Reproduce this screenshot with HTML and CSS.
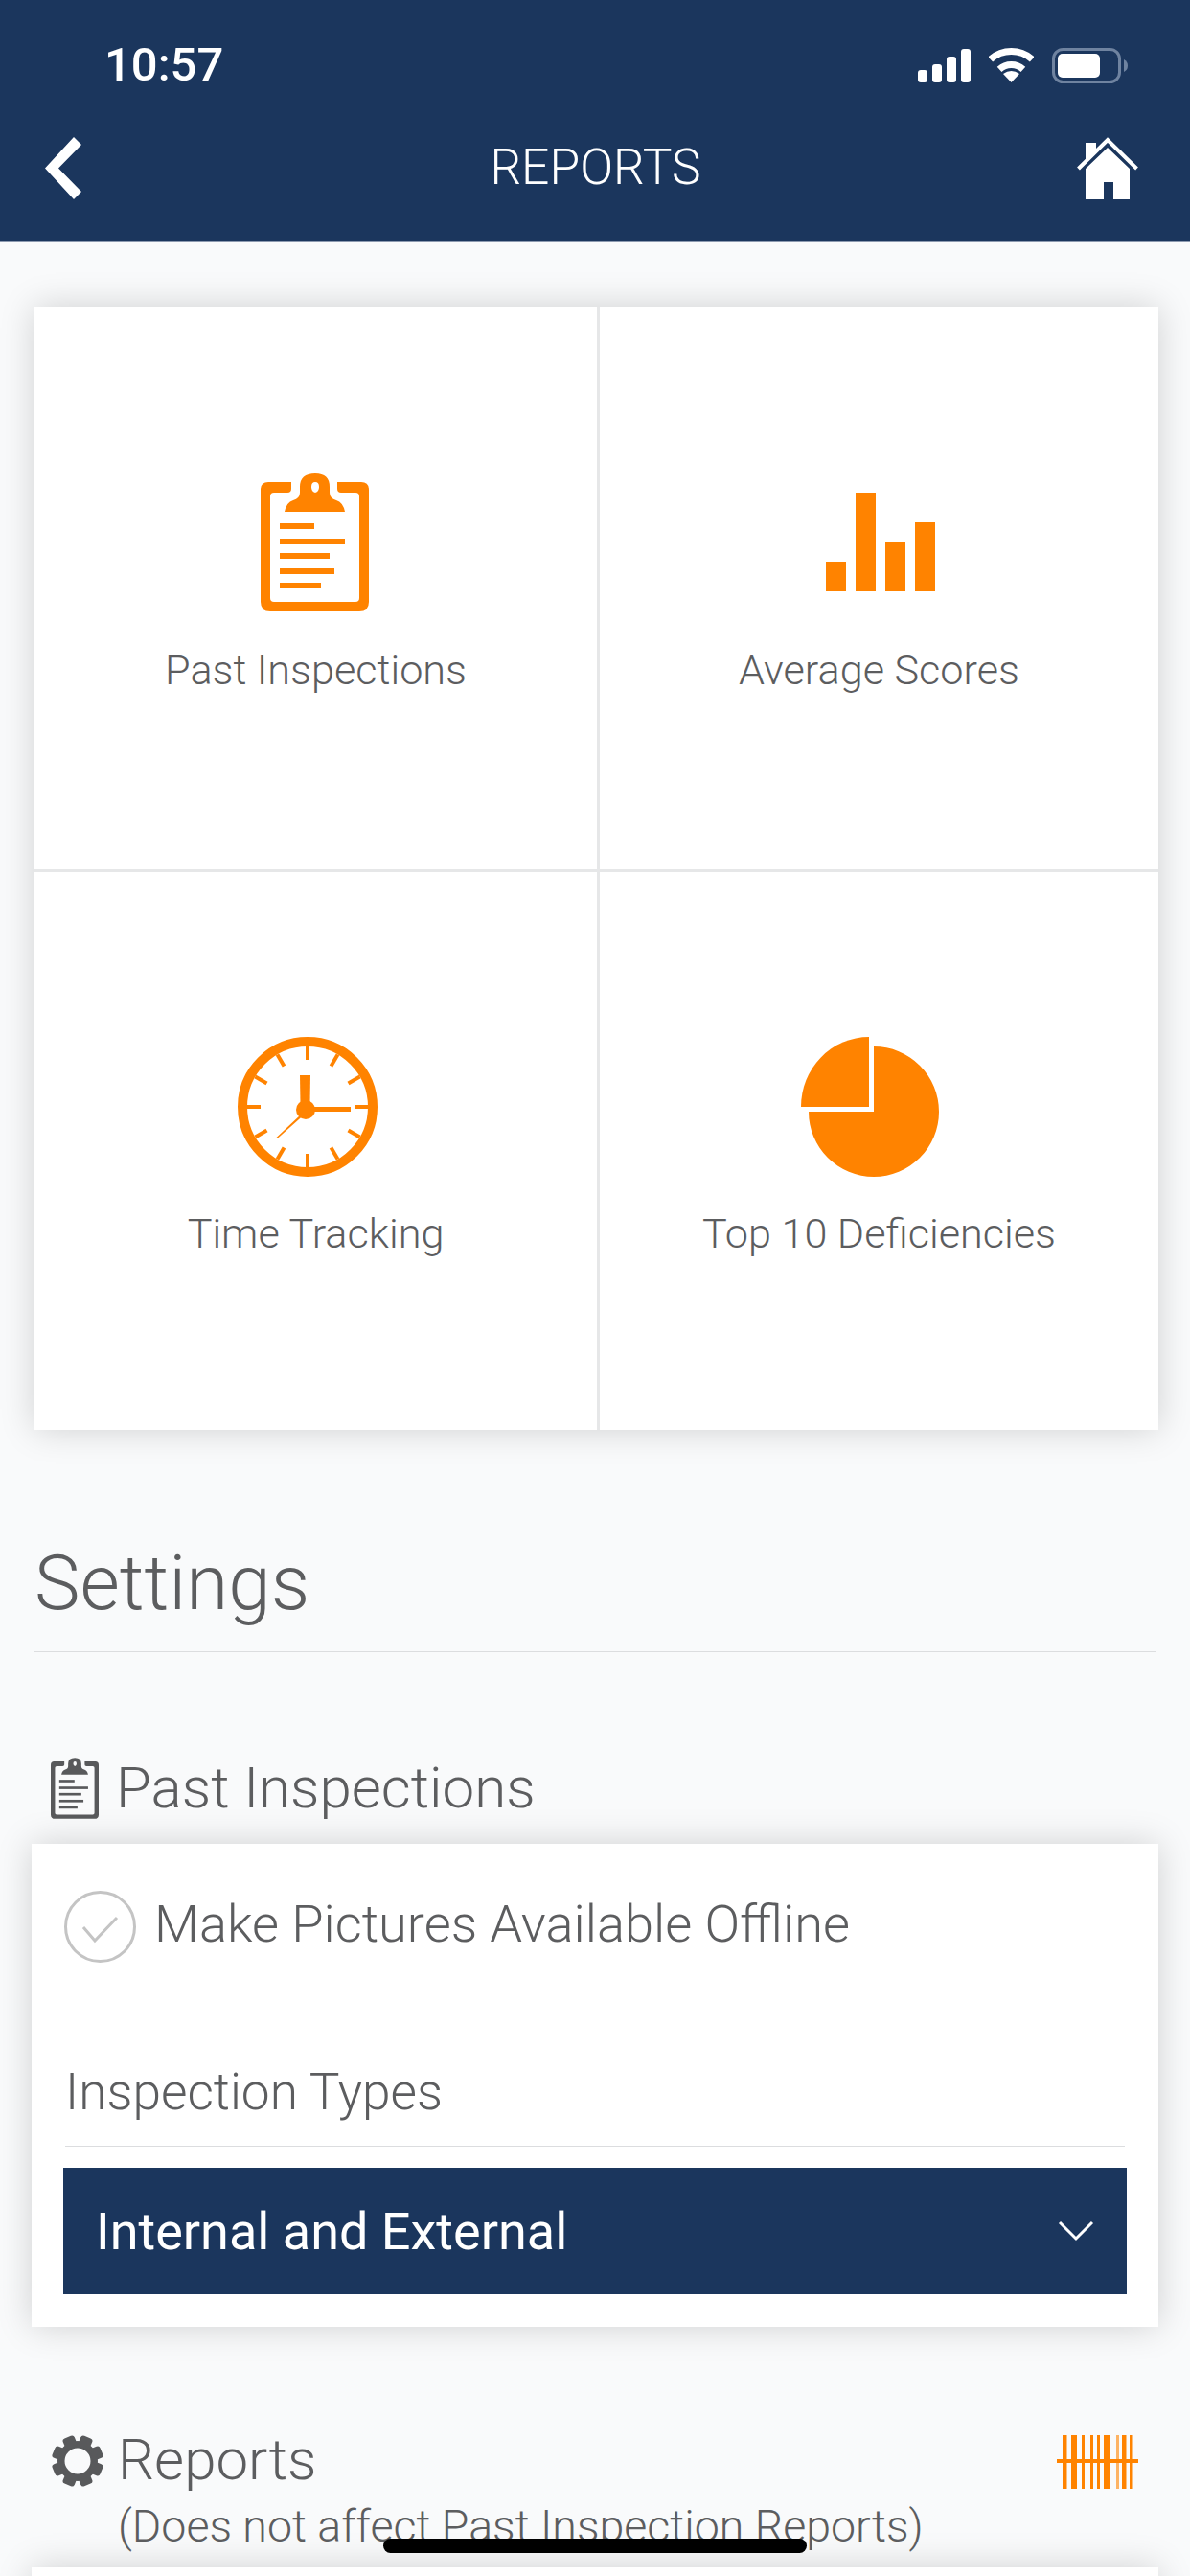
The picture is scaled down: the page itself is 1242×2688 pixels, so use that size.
FILE: index.html
```html
<!DOCTYPE html>
<html lang="en">
<head>
<meta charset="utf-8">
<title>Reports</title>
<link rel="stylesheet" href="styles.css">
</head>
<body>
<div class="page">
  <header class="header">
    <div class="status">
      <span class="time">10:57</span>
      <div class="status-icons">
        <svg class="i-signal" viewBox="0 0 55 35"><rect x="0" y="22" width="10" height="13" rx="3"/><rect x="15" y="16" width="10" height="19" rx="3"/><rect x="30" y="8" width="10" height="27" rx="3"/><rect x="45" y="0" width="10" height="35" rx="3"/></svg>
        <svg class="i-wifi" viewBox="0 0 47 36"><path class="wifi-arc" d="M1.8 11.9A32.5 32.5 0 0 1 45.2 11.9"/><path class="wifi-arc" d="M11.1 22.3A18.5 18.5 0 0 1 35.9 22.3"/><path d="M23.5 36L15 27Q23.5 21 32 27Z"/></svg>
        <svg class="i-battery" viewBox="0 0 79 37"><rect class="batt-shell" x="1.5" y="1.5" width="69" height="34" rx="10"/><rect x="6" y="6" width="44" height="25" rx="5"/><path class="batt-nub" d="M75 12Q79 14 79 18.5Q79 23 75 25Z"/></svg>
      </div>
    </div>
    <nav class="nav">
      <svg class="i-back" viewBox="0 0 38 65"><path d="M30 0L38 8L14 32.5L38 57L30 65L0 32.5Z"/></svg>
      <h1 class="nav-title">REPORTS</h1>
      <svg class="i-home" viewBox="0 0 64 65"><path d="M32 11L55 33V65H38V47H28V65H9V33Z"/><path d="M9 6H20V15L9 25Z"/><path class="roof" d="M1.5 33L32 3L62.5 33"/></svg>
    </nav>
  </header>

  <main class="main">
    <section class="tiles">
      <a class="tile">
        <svg class="tile-icon" viewBox="0 0 164 146">
          <path fill-rule="evenodd" d="M32 9H56V16Q56 20 52 20H38Q34 20 34 24V130Q34 134 38 134H123Q127 134 127 130V24Q127 20 123 20H108Q104 20 104 16V9H129Q137 9 137 17V134Q137 144 127 144H34Q24 144 24 134V17Q24 9 32 9Z"/>
          <path fill-rule="evenodd" d="M49 40Q51 30 58 28Q65 26 65 20V14Q65 0 81 0Q96 0 96 14V20Q96 26 103 28Q110 30 112 40ZM81 9Q77 9 77 14Q77 19 81 20Q85 19 85 14Q85 9 81 9Z"/>
          <rect x="44" y="52" width="36" height="6"/><rect x="44" y="68" width="68" height="6"/><rect x="44" y="83" width="52" height="6"/><rect x="44" y="99" width="57" height="6"/><rect x="44" y="114" width="43" height="6"/>
        </svg>
        <span class="tile-label">Past Inspections</span>
      </a>
      <a class="tile">
        <svg class="tile-icon" viewBox="0 0 164 146">
          <rect x="26" y="92" width="21" height="31"/><rect x="57" y="20" width="21" height="103"/><rect x="88" y="72" width="21" height="51"/><rect x="119" y="51" width="21" height="72"/>
        </svg>
        <span class="tile-label">Average Scores</span>
      </a>
      <a class="tile">
        <svg class="tile-icon" viewBox="0 0 164 146">
          <circle class="clock-ring" cx="73" cy="73" r="68"/>
          <g class="clock-ticks">
            <path d="M73 10V24"/><path d="M73 122V136"/><path d="M10 73H24"/><path d="M122 73H136"/>
            <path d="M41.5 18.4L48.5 30.5"/><path d="M104.5 18.4L97.5 30.5"/><path d="M18.4 41.5L30.5 48.5"/><path d="M127.6 41.5L115.5 48.5"/>
            <path d="M18.4 104.5L30.5 97.5"/><path d="M127.6 104.5L115.5 97.5"/><path d="M41.5 127.6L48.5 115.5"/><path d="M104.5 127.6L97.5 115.5"/>
          </g>
          <path d="M65 40H76L75.500 70H65.500Z"/>
          <circle cx="71" cy="76" r="10"/>
          <path d="M75 73H118V78H75Z"/>
          <path d="M66.500 80.500L68.500 82L41.500 106L40.500 105Z"/>
        </svg>
        <span class="tile-label">Time Tracking</span>
      </a>
      <a class="tile">
        <svg class="tile-icon" viewBox="0 0 164 146">
          <path d="M76 10A68 68 0 1 1 8 78H76Z"/>
          <path d="M71 0A71 73 0 0 0 0 73H71Z"/>
        </svg>
        <span class="tile-label">Top 10 Deficiencies</span>
      </a>
    </section>

    <h2 class="settings-title">Settings</h2>

    <div class="section-head">
      <svg class="i-clip-small" viewBox="24 0 113 144">
        <path fill-rule="evenodd" d="M32 9H56V16Q56 20 52 20H38Q34 20 34 24V130Q34 134 38 134H123Q127 134 127 130V24Q127 20 123 20H108Q104 20 104 16V9H129Q137 9 137 17V134Q137 144 127 144H34Q24 144 24 134V17Q24 9 32 9Z"/>
        <path fill-rule="evenodd" d="M49 40Q51 30 58 28Q65 26 65 20V14Q65 0 81 0Q96 0 96 14V20Q96 26 103 28Q110 30 112 40ZM81 9Q77 9 77 14Q77 19 81 20Q85 19 85 14Q85 9 81 9Z"/>
        <rect x="44" y="52" width="36" height="6"/><rect x="44" y="68" width="68" height="6"/><rect x="44" y="83" width="52" height="6"/><rect x="44" y="99" width="57" height="6"/><rect x="44" y="114" width="43" height="6"/>
      </svg>
      <span class="section-title">Past Inspections</span>
    </div>

    <section class="panel">
      <div class="check-row">
        <svg class="i-check" viewBox="0 0 75 75"><circle cx="37.500" cy="37.500" r="36"/><path d="M20 38L32 52L55 28"/></svg>
        <span class="check-label">Make Pictures Available Offline</span>
      </div>
      <div class="field-label">Inspection Types</div>
      <div class="select">
        <span>Internal and External</span>
        <svg class="i-caret" viewBox="0 0 38 22"><path d="M2 2L19 19L36 2"/></svg>
      </div>
    </section>

    <div class="reports-head">
      <svg class="i-gear" viewBox="0 0 54 54">
        <circle class="gear-ring" cx="27" cy="27" r="17.250"/>
        <g class="gear-teeth" transform="rotate(22.500 27 27)">
          <rect x="20.500" y="0" width="13" height="12" rx="3"/><rect x="20.500" y="42" width="13" height="12" rx="3"/>
          <rect x="0" y="20.500" width="12" height="13" rx="3"/><rect x="42" y="20.500" width="12" height="13" rx="3"/>
          <g transform="rotate(45 27 27)">
            <rect x="20.500" y="0" width="13" height="12" rx="3"/><rect x="20.500" y="42" width="13" height="12" rx="3"/>
            <rect x="0" y="20.500" width="12" height="13" rx="3"/><rect x="42" y="20.500" width="12" height="13" rx="3"/>
          </g>
        </g>
      </svg>
      <div class="reports-text">
        <div class="section-title">Reports</div>
        <div class="reports-sub">(Does not affect Past Inspection Reports)</div>
      </div>
      <svg class="i-barcode" viewBox="0 0 85 56">
        <rect x="6" width="4.500" height="56"/><rect x="15" width="6" height="56"/><rect x="26" width="3" height="56"/><rect x="35" width="3" height="56"/><rect x="42" width="3" height="56"/><rect x="49" width="6.500" height="56"/><rect class="bar-soft" x="62" width="3" height="56"/><rect x="68" width="4.500" height="56"/><rect x="76" width="2.500" height="56"/><rect y="25" width="85" height="4"/>
      </svg>
    </div>

    <section class="panel panel-next"></section>
  </main>
  <div class="home-indicator"></div>
</div>
</body>
</html>
```
FILE: styles.css
```css
* { box-sizing: border-box; }
html, body { margin: 0; padding: 0; }
body { background: #f9fafb; font-family: Roboto, "Liberation Sans", sans-serif; color: #5c5d5f; }
.page { position: relative; width: 1242px; height: 2688px; overflow: hidden; background: #f9fafb; }
svg { display: block; flex: none; }

.header { height: 253px; background: #1b365d; border-bottom: 2px solid #8d9ab0; color: #fff; }
.status { display: flex; justify-content: space-between; align-items: center; height: 136px; padding: 0 65px 0 109px; }
.time { font-size: 49px; font-weight: 500; line-height: 136px; }
.status-icons { display: flex; align-items: center; gap: 19px; }
.status-icons svg { fill: #fff; }
.i-signal { width: 55px; height: 35px; }
.i-wifi { width: 47px; height: 36px; }
.i-battery { width: 79px; height: 37px; }
.wifi-arc { fill: none; stroke: #fff; stroke-width: 7; }
.batt-shell { fill: none; stroke: #6f83a0; stroke-width: 3; }
.batt-nub { fill: #6f83a0; }
.nav { display: grid; grid-template-columns: 1fr auto 1fr; align-items: center; height: 65px; margin-top: 7px; padding: 0 54px 0 47px; }
.nav svg { fill: #fff; }
.i-back { width: 38px; height: 65px; }
.i-home { width: 64px; height: 65px; justify-self: end; }
.roof { fill: none; stroke: #fff; stroke-width: 4; }
.nav-title { margin: 0; padding: 0 0 2px 8px; font-size: 51.500px; font-weight: 300; line-height: 63px; }

.main { padding-top: 67px; }
.tiles { display: grid; grid-template-columns: 590px 583px; grid-template-rows: 590px 582px; margin: 0 33px 0 36px; background: #fff; box-shadow: 0 0 34px rgba(0, 0, 0, .17); }
.tile { display: flex; flex-direction: column; align-items: center; padding-top: 174px; }
.tile:nth-child(1) { border-right: 3px solid #e6e7e8; border-bottom: 3px solid #e6e7e8; }
.tile:nth-child(2) { border-bottom: 3px solid #e6e7e8; }
.tile:nth-child(3) { border-right: 3px solid #e6e7e8; padding-top: 172px; }
.tile:nth-child(4) { padding-top: 172px; }
.tile-icon { width: 164px; height: 146px; fill: #ff8300; }
.clock-ring { fill: none; stroke: #ff8300; stroke-width: 10; }
.clock-ticks path { fill: none; stroke: #ff8300; stroke-width: 4; }
.tile-label { margin-top: 36px; font-size: 43.200px; font-weight: 300; line-height: 48px; white-space: nowrap; }

.settings-title { margin: 118px 35px 0 36px; padding-bottom: 29px; border-bottom: 1px solid #dcdddf; font-size: 80px; font-weight: 300; line-height: 84px; }

.section-head { display: flex; align-items: center; gap: 18px; margin: 110px 0 0 53px; }
.i-clip-small { width: 50px; height: 64px; fill: #58595b; }
.section-title { font-size: 60px; font-weight: 300; line-height: 64px; white-space: nowrap; }

.panel { margin: 26px 33px 0; padding: 49px 33px 34px; background: #fff; box-shadow: 0 0 34px rgba(0, 0, 0, .17); }
.check-row { display: flex; align-items: center; gap: 19px; padding-left: 1px; }
.i-check { width: 75px; height: 75px; fill: none; stroke: #c4c4c4; stroke-width: 3; }
.check-label { padding-bottom: 6px; font-size: 54.200px; font-weight: 300; line-height: 69px; white-space: nowrap; }
.field-label { margin: 105px 2px 0; padding-bottom: 26px; border-bottom: 1px solid #dcdddf; font-size: 53.200px; font-weight: 300; line-height: 60px; }
.select { display: flex; align-items: center; justify-content: space-between; height: 132px; margin-top: 22px; padding: 0 34px; background: #1b365d; color: #fff; font-size: 54px; font-weight: 400; }
.i-caret { width: 38px; height: 22px; fill: none; stroke: #fff; stroke-width: 3; }

.reports-head { display: flex; align-items: flex-start; margin: 113px 54px 0 54px; }
.i-gear { width: 54px; height: 54px; fill: #58595b; }
.gear-ring { fill: none; stroke: #58595b; stroke-width: 7.500; }
.reports-text { flex: 1; margin-left: 15px; margin-top: -6px; }
.reports-sub { margin-top: 12px; font-size: 46.500px; font-weight: 300; line-height: 50px; white-space: nowrap; }
.i-barcode { width: 85px; height: 56px; fill: #ff8300; }
.bar-soft { opacity: .6; }

.panel-next { height: 120px; margin-top: 18px; padding: 0; }

.home-indicator { position: absolute; left: 400px; top: 2649px; width: 442px; height: 15px; border-radius: 8px; background: #000; }
```
